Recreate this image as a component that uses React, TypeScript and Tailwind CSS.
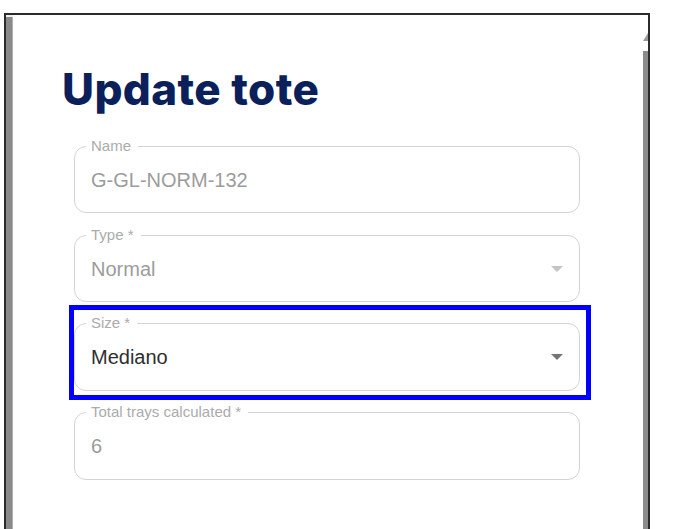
import React from "react";

const font = { fontFamily: '"Liberation Sans", Arial, sans-serif' };

function Arrow({ color }: { color: string }) {
  return (
    <svg width="12" height="6" viewBox="0 0 12 6" className="shrink-0">
      <path d="M0 0 L12 0 L6 6 Z" fill={color} />
    </svg>
  );
}

function Field({
  label,
  value,
  valueClass,
  arrow,
  h = "h-[67px]",
}: {
  label: string;
  value: string;
  valueClass: string;
  arrow?: string;
  h?: string;
}) {
  return (
    <div
      className={`relative ${h} w-[506px] border border-[#d4d4d4] rounded-[12px] flex items-center pl-[16px] pr-[16px]`}
    >
      <span className="absolute left-[11px] top-[-10px] pl-[5px] pr-[7px] bg-white text-[15px] leading-[18px] text-[#ababab] whitespace-nowrap">
        {label}
      </span>
      <span className={`flex-1 text-[20px] leading-[24px] ${valueClass}`}>{value}</span>
      {arrow && <Arrow color={arrow} />}
    </div>
  );
}

export default function App() {
  return (
    <div className="w-[678px] h-[529px] bg-white overflow-hidden" style={font}>
      <div className="pt-[13px]">
        <div className="ml-[4px] w-[646px] h-[516px] border-t-2 border-l-2 border-r-2 border-[#2b2b2b] flex">
          <div className="w-[7px] flex flex-col">
            <div className="h-[2px] bg-[#f0f0f0]" />
            <div className="flex-1 bg-[#8a8a8a] border-r border-[#b0b0b0]" />
          </div>
          <div className="flex-1 bg-white flex flex-col pl-[49px]">
            <h1
              className="mt-[52px] text-[44px] leading-[44px] font-extrabold text-[#0b1f5a] tracking-[0.4px]"
              style={{ fontFamily: "Inter, Lato, sans-serif" }}
            >
              Update tote
            </h1>
            <div className="ml-[12px] mt-[35px] flex flex-col">
              <Field label="Name" value="G-GL-NORM-132" valueClass="text-[#9c9c9c]" />
              <div className="mt-[22px]">
                <Field label="Type *" value="Normal" valueClass="text-[#9c9c9c]" arrow="#c4c4c4" />
              </div>
              <div className="mt-[3px] ml-[-5px] w-[522px] border-[5px] border-[#0000ff] pt-[13px] pb-[4px] pr-[6px]">
                <Field label="Size *" value="Mediano" valueClass="text-[#2e2e2e]" arrow="#757575" h="h-[68px]" />
              </div>
              <div className="mt-[12px]">
                <Field label="Total trays calculated *" value="6" valueClass="text-[#9c9c9c]" h="h-[68px]" />
              </div>
            </div>
          </div>
          <div className="w-[5px] flex flex-col items-center">
            <div className="h-[18px]" />
            <svg width="5" height="8" viewBox="0 0 5 8">
              <path d="M5 0 L5 8 L0 8 Z" fill="#9a9a9a" />
            </svg>
            <div className="h-[10px]" />
            <div className="flex-1 w-[5px] bg-[#8c8c8c]" />
          </div>
        </div>
      </div>
    </div>
  );
}
